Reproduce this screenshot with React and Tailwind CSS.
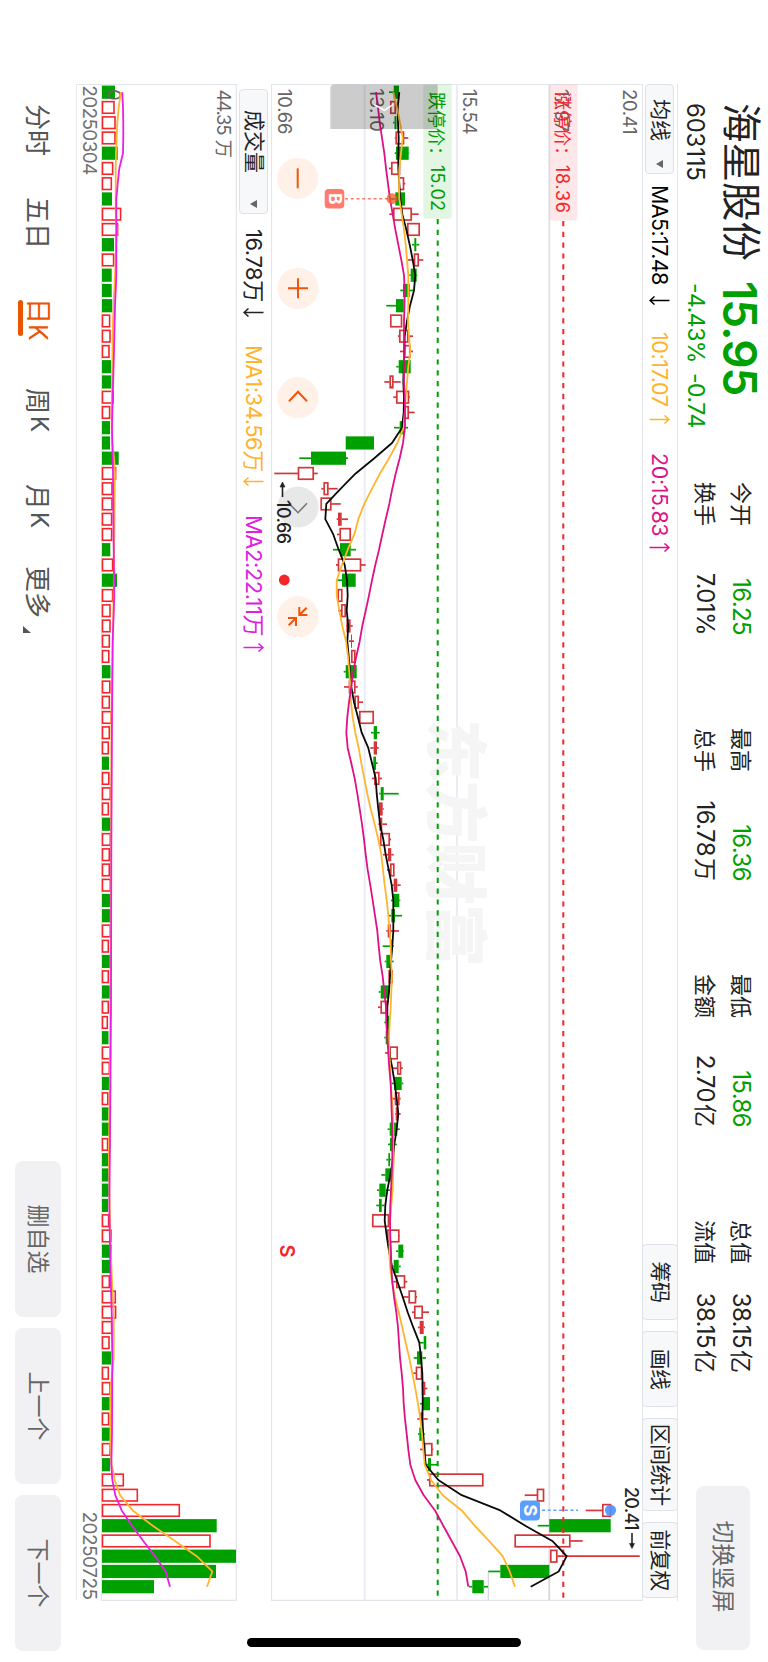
import React from "react";

// Candles: [direction, low, bodyLow, bodyHigh, high, volumeDirection, volume]
// direction: r = hollow red, f = filled red, g = green. Values are chart levels.
const CANDLES = [
  ["g", 389, 393.7, 399, 399, "g", 115], ["r", 390, 390.3, 395.7, 399, "r", 114.7], ["g", 393, 394.5, 396.5, 396.5, "r", 115.7],
  ["r", 394.7, 395.7, 404, 408.3, "r", 115.7], ["g", 394.7, 396, 408.7, 409.3, "g", 117.7], ["r", 389, 391.3, 400, 400, "r", 113.3],
  ["r", 398, 398.7, 404, 405.3, "r", 112], ["g", 390, 395.3, 405, 405, "g", 112], ["r", 389.3, 393.3, 411.7, 418.7, "r", 121.3],
  ["r", 407.3, 407.3, 419.7, 419.7, "r", 118.3], ["g", 412, 414.3, 416.3, 419.3, "g", 114], ["r", 408, 414, 418.7, 423.3, "r", 114.3],
  ["g", 409.3, 410.7, 416.7, 417.3, "g", 111.7], ["g", 400.3, 403, 409.7, 413.3, "g", 111.7], ["g", 386.3, 396, 403.7, 404, "g", 112.3],
  ["r", 390.3, 390.3, 402, 402, "r", 110.3], ["r", 398, 399.3, 408.3, 413, "r", 110.7], ["r", 400, 404.3, 410.3, 413, "r", 109.7],
  ["g", 396.3, 398.7, 410.7, 410.7, "g", 111], ["r", 384.3, 389.7, 393.3, 400.7, "g", 111], ["r", 393.3, 396.3, 409, 409.7, "r", 113.7],
  ["r", 404.7, 404.7, 408.7, 414.7, "r", 110.3], ["g", 394, 399.7, 404.3, 408, "g", 110], ["g", 345.7, 345.7, 374, 374, "g", 110],
  ["g", 299.3, 311, 346, 348, "g", 118.7], ["r", 274.3, 298, 313.7, 317.7, "r", 116.3], ["r", 321.3, 323.7, 328.3, 337.7, "r", 112.7],
  ["r", 320.7, 320.7, 331.3, 340.7, "r", 112.7], ["f", 336.7, 338, 341.7, 348, "r", 112.3], ["r", 337, 339.7, 350.7, 350.7, "r", 112.3],
  ["g", 333, 340, 350.7, 356, "g", 110.3], ["r", 336, 338, 361, 365.7, "r", 113.3], ["g", 337.3, 342, 355.7, 355.7, "g", 117],
  ["r", 337.7, 337.7, 342.3, 342.3, "r", 113.3], ["r", 338.3, 341.3, 345.7, 345.7, "r", 110.7], ["r", 346, 346.7, 350.3, 352.7, "r", 110.7],
  ["f", 349, 351, 352, 354, "r", 110], ["r", 351.3, 351.3, 355.3, 355.3, "r", 109.5], ["g", 343.7, 345.7, 356.7, 356.7, "g", 110.5],
  ["r", 344, 349, 355.3, 357.7, "r", 110.5], ["r", 354.7, 354.7, 358.7, 363, "r", 110], ["r", 359.3, 359.3, 373.7, 373.7, "r", 112],
  ["g", 371, 373.7, 377, 379.7, "r", 110], ["f", 370.3, 373.7, 377, 378.7, "r", 109], ["g", 371, 373.3, 376, 377.7, "g", 109],
  ["r", 372, 374.3, 379.3, 382, "r", 109.5], ["g", 379.3, 380.7, 383.7, 398.7, "r", 111], ["f", 378.3, 379, 382.7, 383.7, "r", 109],
  ["f", 378.3, 379.3, 382.3, 387, "g", 110.5], ["r", 380.3, 380.3, 389.7, 391, "r", 111], ["f", 383, 388, 391.3, 393.7, "r", 110],
  ["r", 387, 390.3, 394.3, 394.3, "r", 110], ["f", 391, 393.7, 397.3, 400.7, "r", 111], ["g", 391, 393.3, 399.3, 400.3, "g", 111],
  ["g", 389, 391.3, 395, 402, "g", 112], ["f", 386.3, 387.7, 391, 399, "r", 111], ["g", 382.7, 391.3, 392.3, 393.7, "r", 109],
  ["g", 384.7, 386.3, 390.3, 393.7, "g", 110], ["r", 388.7, 388.7, 392.7, 392.7, "r", 109], ["g", 378.7, 380.7, 389, 389, "g", 110],
  ["r", 378, 380.7, 386.7, 386.7, "r", 109], ["g", 384.3, 387, 389.3, 389.3, "r", 108], ["g", 384.3, 385.7, 387.7, 389.7, "g", 108.5],
  ["r", 385, 389.7, 397.7, 397.7, "r", 111], ["r", 392.3, 397.3, 401, 402.7, "r", 110], ["g", 391.7, 394, 401.7, 403.3, "g", 110],
  ["r", 391.7, 395, 399.3, 400.7, "r", 108.5], ["f", 395, 395.7, 398.3, 400.7, "g", 108.5], ["g", 387.7, 389.7, 397.3, 399.7, "g", 109],
  ["g", 388, 390, 394.3, 396.7, "r", 108.3], ["g", 386.3, 388.3, 390, 391.3, "g", 108.7], ["g", 381.3, 385.3, 392, 392, "g", 108.7],
  ["g", 377, 379.3, 385.7, 390, "g", 108.7], ["g", 376.3, 379, 381.7, 384.3, "g", 108], ["r", 372.3, 372.3, 389, 389, "r", 109.3],
  ["r", 387.3, 387.3, 399.3, 399.7, "r", 111.7], ["g", 396, 398.3, 403.3, 404, "g", 112], ["g", 392.7, 393.7, 398.7, 400.7, "g", 110],
  ["r", 393.3, 396.3, 405, 407.3, "r", 110], ["r", 403.3, 408.7, 416, 417, "r", 116], ["r", 412, 414.3, 422.7, 429, "r", 116.3],
  ["f", 418, 419.7, 423.7, 425, "r", 112.3], ["g", 419, 423.7, 426.3, 426.3, "r", 109.7], ["g", 413.7, 417, 422.3, 426, "g", 111],
  ["r", 413.3, 416, 422, 422, "r", 109], ["r", 422, 422, 425, 427.3, "r", 110.7], ["g", 420, 423, 430, 430, "g", 109.7],
  ["f", 417.3, 420.3, 423.3, 427.7, "r", 109.3], ["g", 418, 419.3, 423, 424.7, "g", 110], ["r", 420, 424.3, 432.3, 433.3, "r", 110.7],
  ["g", 426, 428, 431, 438, "g", 110], ["r", 427, 429.3, 483.3, 483.3, "r", 124], ["r", 524.7, 537, 544, 544, "r", 138],
  ["r", 585.7, 602.3, 611, 611, "r", 180], ["g", 537.7, 549.3, 610.7, 610.7, "g", 216.7], ["r", 514.7, 514.7, 570.3, 582.7, "r", 210.7],
  ["r", 550.3, 550.3, 557.3, 639.7, "g", 236], ["g", 488.3, 500.3, 549.3, 549.3, "g", 216], ["g", 469, 472.3, 483.7, 488, "g", 154],
];

const MA5 = [399.3, 397.7, 398, 398.7, 398.3, 398.3, 399.3, 400.3, 402.3, 406.3, 409.7, 412.7, 415.3, 414, 410, 407, 404.7, 404.3, 403.7, 403.3, 404, 403.7, 402, 392, 374.3, 355.7, 340.7, 326.3, 325.3, 333.3, 338.7, 344.7, 347, 347.7, 346.7, 348.3, 347.3, 348.7, 350, 351.3, 354, 358, 361.7, 368.3, 372, 375.7, 376.7, 378.3, 380, 383.3, 385.7, 388.7, 391.7, 393.3, 393.3, 393.3, 392.3, 391, 390, 389, 387.3, 387.3, 388.3, 389.3, 392.3, 394.7, 396.7, 398.3, 396.7, 394.3, 393, 390.3, 387.3, 385.3, 384.7, 386.7, 389, 392, 397.5, 402.7, 407.7, 413.3, 419.3, 421, 422.3, 422.7, 422.7, 422.3, 423.3, 424.3, 425.7, 438.3, 461.7, 500.3, 525.3, 552.3, 566.7, 558.7, 530.7];
const MA10 = [393.3, 397, 400, 402.7, 401, 399.3, 399, 399.3, 401.7, 404, 405.7, 407, 408.3, 408.3, 408.3, 408, 409, 410.3, 408.3, 407, 405.7, 404.7, 403.7, 397.3, 389, 380, 372, 364.3, 358.3, 354.3, 347.7, 342, 336.7, 336.7, 339.3, 342.3, 346, 348, 349.3, 350.3, 351, 352.7, 355.3, 358.7, 361.3, 364.3, 367.3, 370.7, 374.7, 378.3, 381.3, 383, 384.7, 386.7, 388.3, 389.7, 390.7, 391, 392, 391.3, 390.7, 389.7, 389, 389.3, 390.3, 390.7, 392, 393, 393.3, 393.3, 393.7, 393, 392.7, 391.3, 390.3, 390, 389.3, 390, 392, 395, 398.7, 402.3, 405.7, 409.3, 412.3, 415.3, 418, 420.3, 422, 423.3, 424.7, 431, 442.7, 461.7, 474.7, 489, 502.7, 509.7, 515];
const MA20 = [376, 378, 379.7, 382, 384.3, 386, 388, 390, 392.7, 395.3, 398.3, 401.3, 404, 404.7, 404.5, 404, 404, 404, 404, 404, 404.7, 405, 405, 403, 399.7, 395.7, 392.3, 389.3, 385.7, 382.3, 379, 375.3, 372, 369, 365.7, 362.3, 359.7, 356.3, 353.3, 351.3, 349, 347.3, 346.3, 347.7, 351.3, 354.7, 357.3, 359.7, 362, 364, 365.7, 367.7, 370.3, 372.7, 375, 377.3, 378.7, 380.3, 382.7, 384.3, 386, 386.3, 387.3, 388.3, 389.3, 390.7, 391.3, 391.7, 392.3, 392.3, 392.3, 391.7, 391, 390.3, 390, 390.3, 391, 391.3, 392.3, 394, 396.3, 398, 399, 400, 401.7, 403, 403.7, 405, 406.7, 408.3, 410.3, 415.3, 423.7, 435, 443.3, 451.7, 460, 465.7, 468.3];

// Volume averages: [day, level]
const VMA1 = [[0, 121], [1, 118.7], [2, 117.3], [4, 116], [5, 115.7], [8, 115.7], [9, 116.7], [11, 115.7], [13, 114.3], [15, 113], [19, 112], [22, 111.7], [23, 112.3], [24, 114], [25, 115], [29, 114.3], [33, 113.7], [36, 112.7], [41, 111.5], [50, 111], [58, 110.5], [64, 110], [70, 108.9], [75, 110.3], [78, 112], [80, 113.7], [83, 113.7], [85, 110.7], [89, 110.3], [90, 111.7], [91, 114.7], [92, 120], [93, 132.7], [94, 152.7], [95, 175], [96, 196.7], [97, 212.3], [98, 207]];
const VMA2 = [[0, 122.3], [1, 123], [2, 123.3], [3, 123.3], [4, 123], [5, 119.3], [6, 117.7], [7, 116.3], [12, 116.3], [13, 115.7], [14, 115], [17, 114], [20, 112.7], [22, 112], [25, 113], [30, 113.7], [33, 114.3], [36, 112.7], [41, 112], [50, 111.3], [60, 111], [69, 110], [73, 109.3], [77, 110.3], [80, 111.7], [83, 112.3], [88, 112], [90, 111.3], [91, 112.3], [92, 115.3], [93, 121.7], [94, 132], [95, 143.3], [96, 155], [97, 165.7], [98, 170]];

const day = (i) => 92.2 + i * 15.25;
const level = (v) => 768 - v;
const line = (vals) => vals.map((v, i) => `${day(i)},${level(v)}`).join(" ");
const pairs = (vals) => vals.map(([i, v]) => `${day(i)},${level(v)}`).join(" ");

function Candle({ c, i }) {
  const [kind, lo, bl, bh, hi] = c;
  const x = day(i);
  const color = kind === "g" ? "#00a000" : "#d4373b";
  const hollow = kind === "r";
  return (
    <g stroke={color} strokeWidth="1.7" fill={hollow ? "#fff" : color}>
      {hi > bh && <line x1={x} x2={x} y1={level(hi)} y2={level(bh)} />}
      {lo < bl && <line x1={x} x2={x} y1={level(bl)} y2={level(lo)} />}
      {hollow ? (
        <rect x={x - 5.8} y={level(bh) + 0.5} width="11.6" height={Math.max(bh - bl - 1, 1.5)} />
      ) : (
        <rect x={x - 6.6} y={level(bh)} width="13.2" height={Math.max(bh - bl, 1)} stroke="none" />
      )}
    </g>
  );
}

function Volume({ c, i }) {
  const x = day(i);
  const top = level(c[6]);
  return c[5] === "g" ? (
    <rect x={x - 6.6} y={top} width="13.2" height={666 - top} fill="#00a000" />
  ) : (
    <rect x={x - 5.8} y={top + 0.7} width="11.6" height={664.8 - top} fill="#fff" stroke="#f5262a" strokeWidth="1.6" />
  );
}

const Label = ({ x, y, w, size = 18.5, fill = "#666", children, ...rest }) => (
  <text x={x} y={y} fontSize={size} fill={fill} textLength={w} {...rest}>{children}</text>
);

function PriceChart() {
  return (
    <svg className="block h-[371px] w-[1662px] shrink-0" viewBox="0 126 1662 371">
      <g stroke="#e3e5eb" strokeWidth="1.2" fill="none">
        <path d="M84.5 126V497M1600.3 126V497M84 496.5H1601" />
        <path d="M84 403.3H1600M84 311H1600" stroke="#e9ebf2" strokeWidth="1.8" />
        <path d="M84 218.7H1600" stroke="#dfe1e7" strokeWidth="1.8" />
        <path d="M1571 279.7H1600M1571 218.7H1600" stroke="#d2d4da" />
      </g>
      <text x="719" y="335.5" fontSize="63" fontWeight="900" fill="#f5f5f6" textLength="248">东方财富</text>
      {CANDLES.map((c, i) => <Candle key={i} c={c} i={i} />)}
      <g fontSize="18.5">
        <Label x="89" y="490" w="45.5">10.66</Label>
        <Label x="88.5" y="398" w="43.5">13.10</Label>
        <Label x="89" y="305.3" w="45.5">15.54</Label>
        <Label x="89" y="213" w="43">17.97</Label>
        <Label x="89" y="145.5" w="45.5">20.41</Label>
      </g>
      <path d="M84.5 344.7H215.7a3 3 0 0 0 3-3V319.3a3 3 0 0 0-3-3H84.5z" fill="#00a000" fillOpacity=".11" />
      <path d="M84.5 218.3H217.5a3 3 0 0 0 3-3V193.5a3 3 0 0 0-3-3H84.5z" fill="#f5262a" fillOpacity=".11" />
      <Label x="92" y="337.7" w="72" size="18" fill="#00a000">跌停价：</Label>
      <Label x="165" y="337.3" w="46" size="18" fill="#00a000">15.02</Label>
      <Label x="92" y="212.2" w="72" size="18" fill="#f5262a">涨停价：</Label>
      <Label x="165" y="212" w="48" size="18" fill="#f5262a">18.36</Label>
      <path d="M219 330.3H1600" stroke="#00a000" strokeWidth="2" strokeDasharray="5.2 5.6" />
      <path d="M221 204.7H1600" stroke="#f5262a" strokeWidth="2" strokeDasharray="5.2 5.6" />
      <g fill="none" strokeWidth="1.8" strokeLinejoin="round">
        <polyline points={line(MA5)} stroke="#0a0a0a" />
        <polyline points={line(MA10)} stroke="#ffb52e" />
        <polyline points={line(MA20)} stroke="#de1186" />
      </g>
      <path d="M84.5 330.3H129V437.7H88.5a4 4 0 0 1-4-4z" fill="#000" fillOpacity=".2" />
      <path d="M104.7 393.7L110.3 383.5L104.3 374.7" fill="none" stroke="#fff" strokeWidth="1.6" />

      <path d="M198.7 423V380" stroke="#ff7b6b" strokeWidth="1.5" strokeDasharray="3 2.7" />
      <circle cx="198.7" cy="376" r="5.5" fill="#f0582c" fillOpacity=".75" />
      <rect x="189" y="423.7" width="19.6" height="19.6" rx="4" fill="#ff7b6b" />
      <text x="198.8" y="439.3" fontSize="17.5" fontWeight="700" fill="#fff" textAnchor="middle">B</text>

      <path d="M1510.3 226V190" stroke="#5a9eff" strokeWidth="1.5" strokeDasharray="3 2.7" />
      <circle cx="1510.3" cy="157.5" r="5.6" fill="#4d90ff" fillOpacity=".9" />
      <rect x="1500.5" y="228" width="20" height="20" rx="4" fill="#5a9eff" />
      <text x="1510.5" y="244.5" fontSize="18" fontWeight="700" fill="#fff" textAnchor="middle">S</text>

      <g strokeWidth="2" fill="none">
        <g stroke="#f0560a">
          <circle cx="178.3" cy="470.3" r="20.6" fill="#fff0e8" stroke="none" />
          <path d="M168.3 470.3H188.3" />
          <circle cx="288.3" cy="470" r="20.6" fill="#fff0e8" stroke="none" />
          <path d="M278.3 470H298.3M288.3 460V480" />
          <circle cx="397.7" cy="470" r="20.6" fill="#fff0e8" stroke="none" />
          <path d="M401.3 461L391.7 470L401.3 479" />
          <circle cx="616.7" cy="470" r="20.6" fill="#fff0e8" stroke="none" />
          <path d="M607 468.7H615V460.7M615 468.7L607.7 461.3M626 472H618V480M618 472L625.3 479.3" />
        </g>
        <circle cx="507" cy="470" r="20.6" fill="#000" fillOpacity=".09" stroke="none" />
        <path d="M503.3 461L512.7 470L503.3 479" stroke="#777" strokeWidth="1.6" />
      </g>
      <g stroke="#222" strokeWidth="1.6" fill="#222">
        <path d="M484 485.5H497" />
        <path d="M482 485.5l5-2.5v5z" strokeWidth=".6" />
        <path d="M1533 136H1547" />
        <path d="M1548.5 136l-5-2.5v5z" strokeWidth=".6" />
      </g>
      <Label x="500" y="491.5" w="44" size="18" fill="#222" fontWeight="500">10.66</Label>
      <Label x="1487" y="143" w="43.5" size="18" fill="#222" fontWeight="500">20.41</Label>
      <circle cx="580" cy="483.7" r="5.4" fill="#f5262a" />
      <text x="1251" y="488.3" fontSize="20" fontWeight="600" fill="#f5262a" textAnchor="middle">S</text>
    </svg>
  );
}

function VolumeChart() {
  return (
    <svg className="block h-[161px] w-[1662px] shrink-0" viewBox="0 531 1662 161">
      <g stroke="#e3e5eb" strokeWidth="1.2" fill="none">
        <path d="M84.5 531.7V692M84 531.7H1600.3V666.5H84M84 691.8H1600.3" />
      </g>
      {CANDLES.map((c, i) => <Volume key={i} c={c} i={i} />)}
      <Label x="89.5" y="551" w="46">44.35</Label>
      <Label x="139.5" y="551" w="18.5">万</Label>
      <Label x="89.3" y="661.5" w="10" size="18">0</Label>
      <Label x="85.3" y="685" w="90" size="19" fill="#707070">20250304</Label>
      <Label x="1511.5" y="685" w="88.5" size="19" fill="#707070">20250725</Label>
      <g fill="none" strokeWidth="1.8" strokeLinejoin="round">
        <polyline points={pairs(VMA1)} stroke="#ffb52e" />
        <polyline points={pairs(VMA2)} stroke="#e81fe8" />
      </g>
    </svg>
  );
}

const Arrow = ({ up, className }) => (
  <svg className={className} width="9" height="21" viewBox="0 0 9 21" fill="none" stroke="currentColor" strokeWidth="1.5">
    <path d={up ? "M4.5 20.5V1M.5 5.5L4.5 1L8.5 5.5" : "M4.5 .5V20M.5 15.5L4.5 20L8.5 15.5"} />
  </svg>
);

const Triangle = () => (
  <svg width="8" height="7" viewBox="0 0 8 7"><path d="M0 0H8L4 7z" fill="#666" /></svg>
);

const STATS = [
  ["今开", "16.25", "", "换手", "7.01%", ""],
  ["最高", "16.36", "", "总手", "16.78", "万"],
  ["最低", "15.86", "", "金额", "2.70", "亿"],
  ["总值", "38.15", "亿", "流值", "38.15", "亿"],
];

const StatRow = ({ name, value, unit, green }) => (
  <div className="flex h-[36px] items-center">
    <span className="text-[22px] tracking-normal">{name}</span>
    <span className={green ? "ml-auto text-[#00a000]" : "ml-auto"}>{value}</span>
    {unit && <span className="ml-[2px] text-[23px] tracking-normal">{unit}</span>}
  </div>
);

const Tool = ({ className, children }) => (
  <div className={`flex h-[36px] items-center justify-center rounded-[4px] border border-[#dfe1e8] bg-[#f7f8fa] text-[21px] text-[#222] ${className}`}>{children}</div>
);

const Pill = ({ children }) => (
  <div className="flex h-[46px] w-[156px] items-center justify-center rounded-[8px] bg-[#f1f1f4] text-[23px] text-[#666]">{children}</div>
);

export default function App() {
  return (
    <div className="h-[1662px] w-[768px] overflow-hidden bg-white">
      <div className="relative flex h-[768px] w-[1662px] origin-top-left translate-x-[768px] rotate-90 flex-col whitespace-nowrap bg-white font-['Inter','Noto_Sans_CJK_SC',sans-serif] text-[#222]">
        <header className="flex h-[90px] shrink-0">
          <div className="w-[482px] shrink-0 pl-[103px]">
            <div className="flex h-[55px] items-center">
              <div className="w-[178px] text-[39.5px] leading-none">海星股份</div>
              <div className="text-[46px] font-semibold leading-none tracking-[-1.1px] text-[#00a000]">15.95</div>
            </div>
            <div className="flex h-[35px] items-center leading-none">
              <div className="w-[180px] text-[24px] tracking-[-0.2px]">603115</div>
              <div className="flex text-[23px] tracking-[-0.5px] text-[#00a000]">
                <div className="w-[90px]">-4.43%</div>
                <div>-0.74</div>
              </div>
            </div>
          </div>
          <div className="flex w-[901px] shrink-0 gap-[93px] pt-[9px] text-[24px] tracking-[-0.6px]">
            {STATS.map(([a, b, u, c, d, v], i) => (
              <div key={a} className="w-[153px] shrink-0">
                <StatRow name={a} value={b} unit={u} green={i < 3} />
                <StatRow name={c} value={d} unit={v} />
              </div>
            ))}
          </div>
          <div className="ml-[103px] mt-[18px] flex h-[54px] w-[164px] shrink-0 items-center justify-center rounded-[8px] bg-[#f1f1f4] pr-[3px] text-[23px] text-[#666]">切换竖屏</div>
        </header>

        <div className="ml-[84px] flex h-[36px] w-[1517px] shrink-0 items-center border-y border-[#e3e5eb] text-[21.5px] tracking-[-0.6px]">
          <div className="flex h-[29px] w-[90px] items-center justify-between rounded-[4px] border border-[#dfe1e8] bg-[#f7f8fa] pl-[14px] pr-[5px] text-[21px] tracking-normal">均线<Triangle /></div>
          <div className="flex w-[147px] items-center pl-[11px] text-black"><span className="w-[111px]">MA5:17.48</span><Arrow /></div>
          <div className="flex w-[121px] items-center pl-[11px] tracking-[-0.4px] text-[#ffb32e]"><span className="w-[83px]">10:17.07</span><Arrow up /></div>
          <div className="flex items-center pl-[11px] tracking-[-0.4px] text-[#de1186]"><span className="w-[90px]">20:15.83</span><Arrow up /></div>
          <div className="ml-auto mr-[3px] flex gap-[11px]">
            <Tool className="w-[76px]">筹码</Tool>
            <Tool className="w-[76px]">画线</Tool>
            <Tool className="w-[93px]">区间统计</Tool>
            <Tool className="w-[76px]">前复权</Tool>
          </div>
        </div>

        <PriceChart />

        <div className="ml-[89px] flex h-[34px] shrink-0 items-center text-[22px] tracking-[-0.5px]">
          <div className="flex h-[29px] w-[125px] items-center justify-between rounded-[4px] border border-[#dfe1e8] bg-[#f7f8fa] pl-[20px] pr-[5px] text-[21px] tracking-normal">成交量<Triangle /></div>
          <div className="flex w-[116px] items-center pl-[15px]"><span className="w-[79px]">16.78万</span><Arrow /></div>
          <div className="flex w-[172px] items-center pl-[15px] text-[#ffb32e]"><span className="w-[132px]">MA1:34.56万</span><Arrow /></div>
          <div className="flex items-center pl-[13px] text-[#e020e0]"><span className="w-[128px]">MA2:22.11万</span><Arrow up /></div>
        </div>

        <VolumeChart />

        <footer className="flex h-[76px] shrink-0 items-center text-[26px] text-[#555]">
          <div className="ml-[104px] w-[93px]">分时</div>
          <div className="w-[101px]">五日</div>
          <div className="flex w-[90px] flex-col text-[#ea5504]">
            <div>日<span className="text-[25px]">K</span></div>
            <div className="-mt-[5px] ml-[2px] h-[5px] w-[36px] rounded-full bg-[#ea5504]" />
          </div>
          <div className="flex w-[96px] gap-[2px]">周<span className="text-[24px]">K</span></div>
          <div className="flex w-[82px] gap-[2px]">月<span className="text-[24px]">K</span></div>
          <div className="flex items-end">更多<svg className="mb-[5px] ml-[8px]" width="7" height="8" viewBox="0 0 7 8"><path d="M7 0V8H0z" fill="#555" /></svg></div>
          <div className="ml-auto mr-[11px] flex gap-[11px]">
            <Pill>删自选</Pill>
            <Pill>上一个</Pill>
            <Pill>下一个</Pill>
          </div>
        </footer>
        <div className="absolute left-[1638px] top-[247px] h-[274px] w-[9px] rounded-full bg-black" />
      </div>
    </div>
  );
}
